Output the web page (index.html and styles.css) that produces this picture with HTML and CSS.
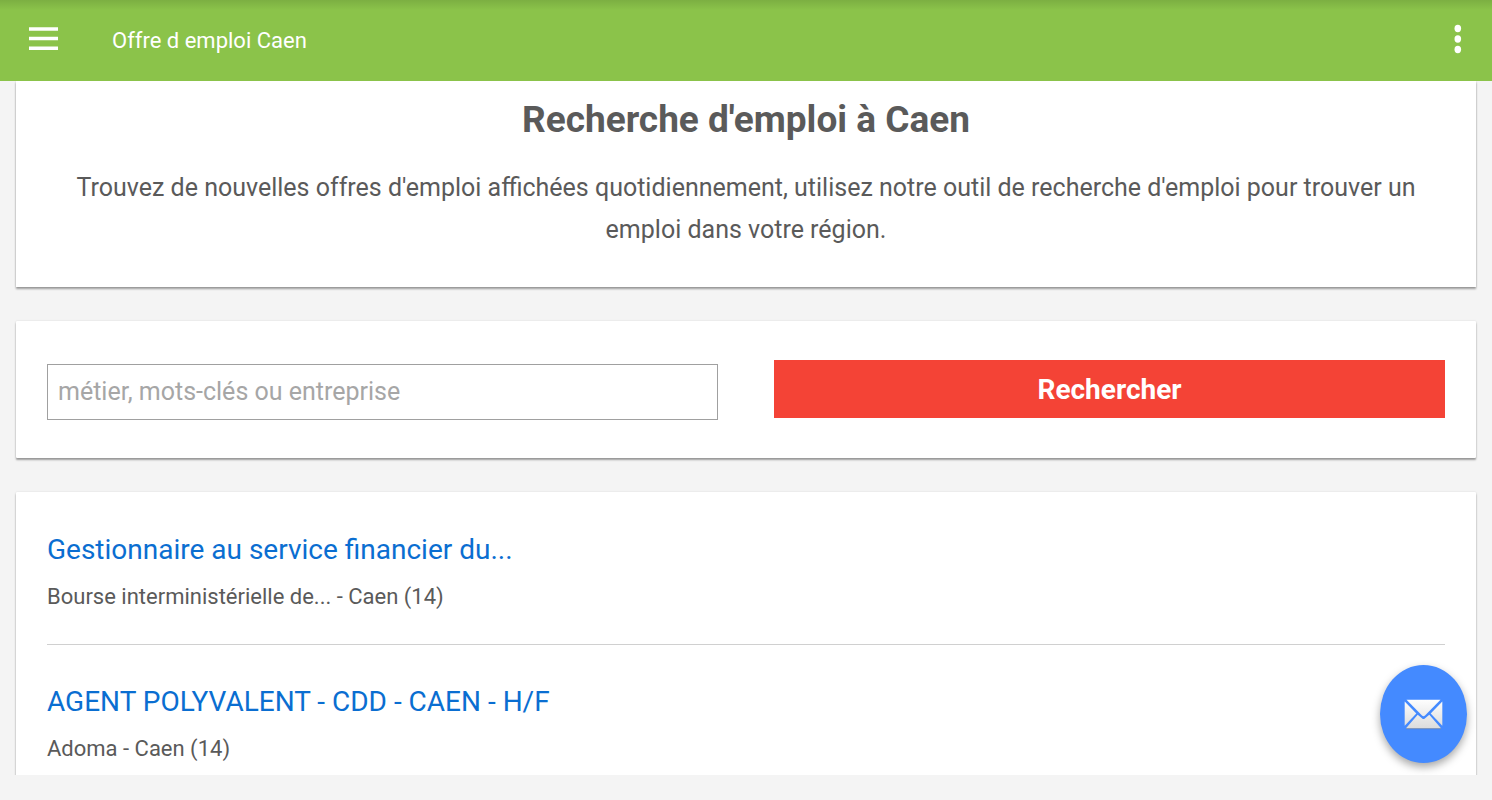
FILE: index.html
```html
<!DOCTYPE html>
<html lang="fr">
<head>
<meta charset="utf-8">
<meta name="viewport" content="width=device-width, initial-scale=1">
<title>Offre d emploi Caen</title>
<link rel="stylesheet" href="styles.css">
</head>
<body>
<header class="app-bar">
  <button class="icon-button" type="button" aria-label="Menu">
    <svg width="30" height="24" viewBox="0 0 30 24" fill="#fff" aria-hidden="true"><path d="M1 .3h29v3.500H1zM1 9.800h29v3.500H1zM1 19.600h29v3.500H1z"/></svg>
  </button>
  <span class="app-title">Offre d emploi Caen</span>
  <button class="icon-button" type="button" aria-label="Plus d'options">
    <svg width="8" height="30" viewBox="0 0 8 30" fill="#fff" aria-hidden="true"><ellipse cx="3.800" cy="4.500" rx="3.300" ry="3.700"/><ellipse cx="3.800" cy="15" rx="3.300" ry="3.700"/><ellipse cx="3.800" cy="25.500" rx="3.300" ry="3.700"/></svg>
  </button>
</header>
<div class="viewport">
  <main class="content">
    <section class="card intro">
      <h1 class="heading">Recherche d'emploi à Caen</h1>
      <p class="lead">Trouvez de nouvelles offres d'emploi affichées quotidiennement, utilisez notre outil de recherche d'emploi pour trouver un emploi dans votre région.</p>
    </section>
    <form class="card search">
      <input class="search-input" type="text" aria-label="Métier, mots-clés ou entreprise" placeholder="métier, mots-clés ou entreprise">
      <button class="search-button" type="button">Rechercher</button>
    </form>
    <section class="card jobs">
      <article class="job">
        <a class="job-title" href="#">Gestionnaire au service financier du...</a>
        <p class="job-place">Bourse interministérielle de... - Caen (14)</p>
      </article>
      <article class="job">
        <a class="job-title" href="#">AGENT POLYVALENT - CDD - CAEN - H/F</a>
        <p class="job-place">Adoma - Caen (14)</p>
      </article>
    </section>
  </main>
  <button class="fab" type="button" aria-label="Envoyer un e-mail">
    <svg width="39" height="31" viewBox="0 0 39 31" aria-hidden="true">
      <defs><linearGradient id="paper" x1="0" y1="0" x2="0" y2="31" gradientUnits="userSpaceOnUse"><stop offset="0" stop-color="#fff"/><stop offset="1" stop-color="#dadada"/></linearGradient></defs>
      <path d="M2 29.700h35" stroke="#6b7fa3" stroke-width="1"/>
      <g fill="url(#paper)"><path d="M2.500.8h34L21 16.500q-1.500 1.500-3 0z"/><path d="M.7 2.500 12.300 14.500.7 26.800z"/><path d="M38.300 2.500 26.700 14.500 38.300 26.800z"/><path d="M13.700 15.800l4.500 3.700q1.300 1 2.600 0L25.300 15.800 37 29.300H2z"/></g>
    </svg>
  </button>
</div>
</body>
</html>
```
FILE: styles.css
```css
* { box-sizing: border-box; }

body {
  margin: 0;
  height: 100vh;
  display: flex;
  flex-direction: column;
  padding-bottom: 25px;
  background: #f4f4f4;
  color: #5a5a5a;
  font-family: Roboto, "Liberation Sans", sans-serif;
  overflow: hidden;
}

button { border: 0; padding: 0; font-family: inherit; cursor: pointer; }
h1, p { margin: 0; }

.app-bar {
  flex: none;
  display: flex;
  align-items: center;
  height: 81px;
  padding: 0 30px 0 28px;
  background: linear-gradient(#7caf42, #8bc34a 10px);
  color: #fff;
}
.icon-button { display: flex; padding-bottom: 3px; background: none; }
.app-title { flex: 1; margin-left: 54px; font-size: 22px; line-height: 32px; }

.viewport { position: relative; flex: 1; min-height: 0; overflow: hidden; }
.content { display: flex; flex-direction: column; gap: 34px; padding: 0 16px; }
.card {
  background: #fff;
  border-radius: 1px;
  box-shadow: 0 2px 2px rgba(0, 0, 0, 0.36), 0 0 2px rgba(0, 0, 0, 0.12);
}

.intro { padding: 15px 48px 36px; border-radius: 0; text-align: center; }
.heading { font-size: 37px; line-height: 48px; font-weight: 700; margin-bottom: 23px; }
.lead { font-size: 25px; line-height: 42px; }

.search {
  display: grid;
  grid-template-columns: 1fr 1fr;
  gap: 56px;
  padding: 39px 31px 38px;
}
.search-input {
  align-self: end;
  width: 100%;
  height: 56px;
  margin-top: 4px;
  padding: 0 10px 2px;
  border: 1px solid #a0a0a0;
  border-radius: 0;
  background: #fff;
  color: #5a5a5a;
  font-family: inherit;
  font-size: 25px;
}
.search-input::placeholder { color: #a6a6a6; opacity: 1; }
.search-button {
  align-self: start;
  height: 58px;
  background: #f44336;
  color: #fff;
  font-size: 28px;
  font-weight: 700;
}

.jobs { padding: 1px 31px 0; }
.job { padding: 35px 0 31px; }
.job + .job { border-top: 1px solid #d0d0d0; }
.job-title { display: block; color: #0a6ed1; font-size: 28px; line-height: 44px; text-decoration: none; }
.job-place { margin-top: 9px; font-size: 22px; line-height: 32px; }

.fab {
  position: absolute;
  right: 25px;
  bottom: 12px;
  width: 87px;
  height: 98px;
  display: flex;
  align-items: center;
  justify-content: center;
  border-radius: 50%;
  background: #448aff;
  box-shadow: 0 4px 9px rgba(0, 0, 0, 0.35);
}
```
